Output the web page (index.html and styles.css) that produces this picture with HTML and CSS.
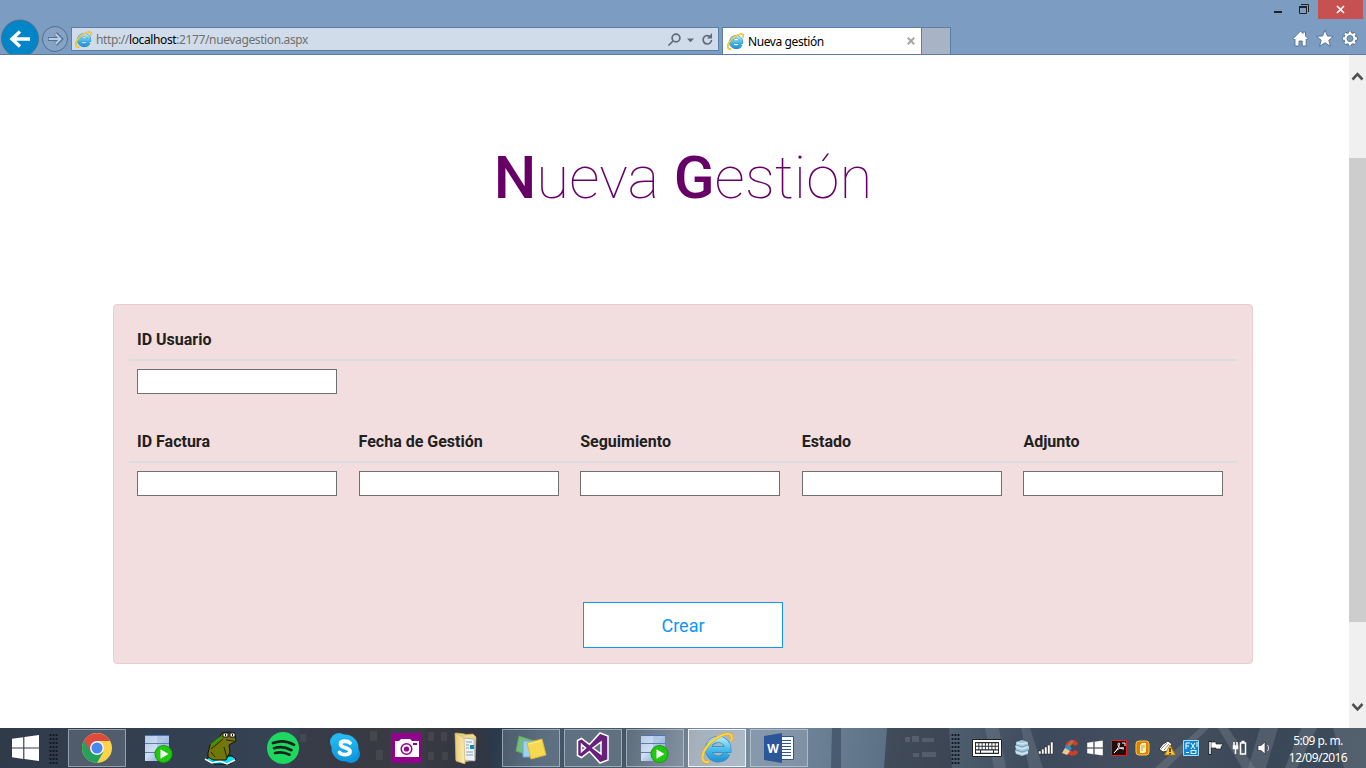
FILE: index.html
```html
<!DOCTYPE html>
<html lang="es">
<head>
<meta charset="utf-8">
<title>Nueva gestión</title>
<link rel="stylesheet" href="styles.css">
</head>
<body>
<svg class="defs" aria-hidden="true">
  <defs>
    <linearGradient id="ieBlue" x1="0" y1="0" x2="0" y2="1"><stop offset="0" stop-color="#a3e4fa"/><stop offset=".5" stop-color="#4bbdec"/><stop offset="1" stop-color="#2698d8"/></linearGradient>
    <linearGradient id="serverBlue" x1="0" y1="0" x2="1" y2="1"><stop offset="0" stop-color="#b5c9e8"/><stop offset=".45" stop-color="#cfdef3"/><stop offset="1" stop-color="#6f92c9"/></linearGradient>
    <linearGradient id="folderGold" x1="0" y1="0" x2="1" y2="0"><stop offset="0" stop-color="#e9c974"/><stop offset="1" stop-color="#fbeeb4"/></linearGradient>
    <linearGradient id="skypeBlue" x1="0" y1="0" x2="0" y2="1"><stop offset="0" stop-color="#27bdf3"/><stop offset="1" stop-color="#0c95dc"/></linearGradient>
    <symbol id="ie" viewBox="0 0 32 32">
      <path d="M26 21.500A9.800 9.800 0 1 1 27 17.500H9" fill="none" stroke="#2d87b8" stroke-width="6.800"/>
      <path d="M26 21.500A9.800 9.800 0 1 1 27 17.500H9" fill="none" stroke="url(#ieBlue)" stroke-width="5.600"/>
      <path d="M8 29.500C1 32-1 25 5 16S24 0 29.500 2.500c2 1.500 1.500 4 .5 6.500" fill="none" stroke="#e3a41b" stroke-width="2.900"/>
      <path d="M8 29.500C1 32-1 25 5 16S24 0 29.500 2.500c2 1.500 1.500 4 .5 6.500" fill="none" stroke="#ffd644" stroke-width="1.900"/>
    </symbol>
    <symbol id="server" viewBox="0 0 30 30">
      <path d="M1 2h24v26H1z" fill="url(#serverBlue)"/>
      <path d="M13 3h12v7H13zM13 11h12v8H13z" fill="#8facdc" opacity=".45"/>
      <path d="M1 10.500h24M1 19.500h24" stroke="#5d7db0"/>
      <path d="M1 2.500h24" stroke="#4b74b5"/>
      <circle cx="19.500" cy="21" r="9" fill="#159e0a"/><circle cx="19.500" cy="21" r="8" fill="#1fc90d"/>
      <path d="M16.500 16.200l8 4.800-8 4.800z" fill="#fff"/>
    </symbol>
    <symbol id="windows" viewBox="0 0 26 25">
      <path d="M0 3.600l10.800-1.500v9.900H0zM11.900 1.900L26 0v12H11.900zM0 13.100h10.800V23L0 21.500zM11.900 13.100H26V25l-14.100-1.900z" fill="#fff"/>
    </symbol>
  </defs>
</svg>

<header class="browser">
  <div class="titlebar">
    <svg class="minimize" width="8" height="19"><path d="M0 11h8v2H0z" fill="#222"/></svg>
    <svg class="restore" width="11" height="19" fill="none" stroke="#222"><path d="M2 4.500h7.500V12"/><path d="M.5 6.500h7v7h-7z"/><path d="M0 7h8" stroke-width="2"/></svg>
    <button class="close" aria-label="Cerrar"><svg width="9" height="9"><path d="M1 1l7 7M8 1L1 8" stroke="#fff" stroke-width="1.700"/></svg></button>
  </div>
  <nav class="navbar">
    <svg class="back" width="40" height="35">
      <circle cx="20" cy="19.500" r="18.500" fill="#0085c8" stroke="#506f91"/>
      <path d="M30 20H12M20 12.500L12 20l8 7.500" fill="none" stroke="#fff" stroke-width="3.400"/>
    </svg>
    <svg class="forward" width="28" height="35">
      <circle cx="14" cy="19" r="12.500" fill="#86a3c6" stroke="#506f91"/>
      <path d="M7 19h12M14.500 13.500l5.500 5.500-5.500 5.500" fill="none" stroke="#536f91" stroke-width="4"/>
      <path d="M7.700 19h12M14.500 14l5 5-5 5" fill="none" stroke="#b8cce2" stroke-width="2"/>
    </svg>
    <div class="address">
      <svg width="17" height="17"><use href="#ie"/></svg>
      <span class="url">http://<b>localhost</b>:2177/nuevagestion.aspx</span>
      <svg class="address-tools" width="48" height="18" fill="none" stroke="#606c7b" stroke-width="1.700">
        <circle cx="10" cy="8" r="3.900"/><path d="M7 11l-4.500 4.500"/>
        <path d="M21 8.500h7l-3.500 3.700z" fill="#606c7b" stroke="none"/>
        <path d="M43.500 6.200A4.200 4.200 0 1 0 45.500 10"/><path d="M46 3v5.500h-5z" fill="#606c7b" stroke="none"/>
      </svg>
    </div>
    <div class="tab">
      <svg width="17" height="17"><use href="#ie"/></svg>
      <span>Nueva gestión</span>
      <svg class="tab-close" width="8" height="8"><path d="M.8.8l6.400 6.400M7.200.8L.8 7.200" stroke="#a5a5a5" stroke-width="2"/></svg>
    </div>
    <div class="new-tab"></div>
    <svg class="browser-tools" width="66" height="19" viewBox="0 0 66 19" fill="#fff" stroke="#506f91" stroke-width=".9">
      <path d="M1 9.800L8.500 2l2.500 2.500V3h2.500v4l2.700 2.800-1.200 1.200-.8-.8V17h-4v-5H7v5H3v-6.800l-.8.800z"/>
      <path d="M33 1l2.400 6 6.100.3-4.700 3.900 1.700 6.100-5.500-3.500-5.500 3.500 1.700-6.100-4.700-3.900 6.100-.3z"/>
      <g fill="none">
        <path d="M58 2v15M50.500 9.500h15M52.700 4.200l10.600 10.600M63.300 4.200L52.700 14.800" stroke-width="4"/>
        <circle cx="58" cy="9.500" r="4.500" stroke-width="4"/>
        <path d="M58 2.500v14M51 9.500h14M53 4.500l10 10M63 4.500l-10 10" stroke="#fff" stroke-width="2.400"/>
        <circle cx="58" cy="9.500" r="4.400" stroke="#fff" stroke-width="2.400"/>
      </g>
      <circle cx="58" cy="9.500" r="3" fill="#7c9cc1"/>
    </svg>
  </nav>
</header>

<div class="viewport">
  <main class="page">
    <h1 class="title"><b>N</b>ueva <b>G</b>estión</h1>
    <form class="panel">
      <div class="fields">
        <div class="field"><label for="usuario">ID Usuario</label><input id="usuario"></div>
      </div>
      <div class="fields">
        <div class="field"><label for="factura">ID Factura</label><input id="factura"></div>
        <div class="field"><label for="fecha">Fecha de Gestión</label><input id="fecha"></div>
        <div class="field"><label for="seguimiento">Seguimiento</label><input id="seguimiento"></div>
        <div class="field"><label for="estado">Estado</label><input id="estado"></div>
        <div class="field"><label for="adjunto">Adjunto</label><input id="adjunto"></div>
      </div>
      <button type="button" class="create">Crear</button>
    </form>
  </main>
  <div class="scrollbar">
    <svg width="17" height="103"><path d="M3.500 24.500l5-5.300 5 5.300" fill="none" stroke="#505050" stroke-width="2.600"/></svg>
    <div class="thumb"></div>
    <svg width="17" height="106"><path d="M3.500 82l5 5.300 5-5.300" fill="none" stroke="#505050" stroke-width="2.600"/></svg>
  </div>
</div>

<footer class="taskbar">
  <svg class="skyline" width="1366" height="40" aria-hidden="true">
    <path d="M300 0h90v40h-100zM425 0h62l5 40h-65z" fill="#39363b" opacity=".45"/>
    <path d="M300 6h6v8h-6zM370 3h7v10h-7zM376 22h7v10h-7zM428 4h6v9h-6zM441 4h6v9h-6zM428 24h6v8h-6zM442 24h6v8h-6z" fill="#6a6b70" opacity=".25"/>
    <path d="M832 0h9v40h-10z" fill="#34465a" opacity=".6"/>
    <path d="M887 0h62l3 40h-68z" fill="#343c49" opacity=".7"/>
    <path d="M905 9h5v5h-5zM912 8h7v6h-7zM922 10h12v4h-12zM913 25h6v4h-6zM922 24h14v5h-14z" fill="#8791a0" opacity=".3"/>
    <path d="M985 0h14l7 40h-12zM1021 0h9l13 40h-14z" fill="#8d96a2" opacity=".28"/>
    <path d="M1155 40L1200 0h9l-42 40zM1218 0h10l27 40h-13z" fill="#9ca2aa" opacity=".25"/>
    <path d="M1260 0h18l-12 40h-18zM1301 0h16l-20 40h-12zM1333 0h33v40h-22z" fill="#87929d" opacity=".3"/>
  </svg>
  <div class="start"><svg width="27" height="26"><use href="#windows"/></svg></div>
  <div class="grip"></div>
  <div class="apps">
    <div class="app open">
      <svg width="30" height="30" viewBox="0 0 30 30">
        <circle cx="15" cy="15" r="15" fill="#fdd34a"/>
        <path d="M15 15L2.010 7.500A15 15 0 0 0 15 30l6.500-11.250z" fill="#26a15d"/>
        <path d="M2.010 7.500A15 15 0 0 1 28 8H15l-6.500 10.750z" fill="#dd4b3e"/>
        <circle cx="15" cy="15" r="7" fill="#f4f4f4"/><circle cx="15" cy="15" r="5.500" fill="#4788f0"/>
      </svg>
    </div>
    <div class="app"><svg width="30" height="30"><use href="#server"/></svg></div>
    <div class="app">
      <svg width="34" height="34" viewBox="0 0 34 34">
        <path d="M2 28l6-3 20 0 4 3-6 5H10z" fill="#09dff0" stroke="#000"/>
        <path d="M1 28l7 4 8-2 7 3 8-4" fill="none" stroke="#fff" stroke-width="1.500"/>
        <path d="M4 22l2-8 9-7 3-5 8-1 5 4 1 5-7 4 1 7-4 8H9l-5-3z" fill="#777408" stroke="#111"/>
        <path d="M7 18L19 8M7 21l4 5M20 16l3 11" fill="none" stroke="#172b00"/>
        <path d="M7 14l10-8" stroke="#25a900" stroke-width="2"/>
        <path d="M9 20h2M14 16h2M18 20h2M13 23h2M21 13h2" stroke="#20a000"/>
        <path d="M19 2h5v4h-5zM26 2h5v4h-5z" fill="#fff" stroke="#111"/><path d="M21 3h1v2h-1zM28 3h1v2h-1z" fill="#111"/><path d="M22 9l8 1" stroke="#222"/>
      </svg>
    </div>
    <div class="app">
      <svg width="32" height="32" viewBox="0 0 32 32"><circle cx="16" cy="16" r="16" fill="#1ed760"/><path d="M6 11c7-2.600 15-1.700 21 1.800M7 16.200c6-1.800 12-1 17.500 2M8 21c5-1.300 10-.7 14.500 1.700" fill="none" stroke="#17241c" stroke-width="2.700" stroke-linecap="round"/></svg>
    </div>
    <div class="app">
      <svg width="30" height="30" viewBox="0 0 30 30"><circle cx="9" cy="9" r="9" fill="#21b7ef"/><circle cx="21" cy="21" r="9" fill="#0c95dc"/><circle cx="15" cy="15" r="13.500" fill="url(#skypeBlue)"/><path d="M20 10C17.500 7.500 10.500 7.500 10.500 11c0 4.500 9.500 3 9.500 7.500 0 4-7.800 4-10.500 1" fill="none" stroke="#fff" stroke-width="3.800" stroke-linecap="round"/></svg>
    </div>
    <div class="app">
      <svg width="30" height="30" viewBox="0 0 30 30"><path d="M0 0h30v30H0z" fill="#92008d"/><path d="M3 8h4l2-2h9l2 2h7v16H3z" fill="#fff"/><circle cx="14.500" cy="16" r="5.300" fill="none" stroke="#92008d" stroke-width="1.500"/><circle cx="14.500" cy="16" r="2.600" fill="#92008d"/><path d="M21 10h4v2h-4z" fill="#92008d"/></svg>
    </div>
    <div class="app folder">
      <svg width="24" height="32" viewBox="0 0 24 32"><path d="M2 1l9 1v28l-9-2z" fill="url(#folderGold)" stroke="#c8aa59" stroke-width=".7"/><path d="M7 3l12-1 3 3-1 23-12 2z" fill="#f0d78c" stroke="#cdb265" stroke-width=".7"/><path d="M8 6l12 1 1 22-12-1z" fill="#edf2f5" stroke="#9ba8b0" stroke-width=".7"/><path d="M12 10h6M12 13h3M12 16h3M12 20h7M12 23h7" stroke="#8aa2b3"/><path d="M16 13h4v4h-4z" fill="#1685bb"/><path d="M1 1l9 5 1 26-9-3z" fill="url(#folderGold)" stroke="#cdb265" stroke-width=".7"/></svg>
    </div>
    <div class="app open">
      <svg width="34" height="28" viewBox="0 0 34 28"><path d="M5 2l15 5-4 15-14-5z" fill="#77bd78" stroke="#5fa766"/><path d="M9 7h15l-1 16H9z" fill="#9bd1f6" stroke="#69a9d2"/><path d="M13 9l15-4 4 16-15 4z" fill="#f4d951" stroke="#dbb934"/><path d="M14 10l13-3" stroke="#fff18c"/></svg>
    </div>
    <div class="app open">
      <svg width="34" height="34" viewBox="0 0 34 34"><path fill-rule="evenodd" d="M1.500 9.500l4-2 8 6L24 2l8 3v24l-8 3-10.500-11.500-8 6-4-2zM5.500 13.500v7l4-3.500zM25 11l-8 6 8 6z" fill="#68217a" stroke="#fff" stroke-width="1.500"/></svg>
    </div>
    <div class="app open"><svg width="30" height="30"><use href="#server"/></svg></div>
    <div class="app open active"><svg width="32" height="32"><use href="#ie"/></svg></div>
    <div class="app open">
      <svg width="30" height="30" viewBox="0 0 30 30"><path d="M16 3.500h13.500v23H16z" fill="#fff" stroke="#2b579a"/><path d="M18 7.500h9M18 10.500h9M18 13.500h9M18 16.500h9M18 19.500h9M18 22.500h9" stroke="#2b579a"/><path d="M0 3l18-3v30L0 27z" fill="#2b579a"/><text class="word-letter" x="9" y="19.500" text-anchor="middle">W</text></svg>
    </div>
  </div>
  <div class="grip tray-grip"></div>
  <svg class="keyboard" width="30" height="18"><path d="M.5.500h29v17H.5z" fill="#fff" stroke="#222"/><path d="M3 3h24v12H3z" fill="#252a31"/><path d="M4 5.500h22M4 9h22" stroke="#fff" stroke-width="2.400" stroke-dasharray="2.400 .87"/><path d="M4 12.700h4M9 12.700h12M22 12.700h4" stroke="#fff" stroke-width="2.200"/></svg>
  <div class="tray">
    <svg width="16" height="16" viewBox="0 0 16 16"><path d="M2 2l6-2 6 2v3l1 1v3l-1 2v3l-6 2-6-2-1-3 1-2-1-3 1-1z" fill="#a4c7dc"/><path d="M3 3l5 1 5-1M2 7l6 2 6-2M2 12l6 2 6-2" fill="none" stroke="#d2e7f3" stroke-width="1.600"/><path d="M2 5l6 2 6-2M2 10l6 2 6-2" fill="none" stroke="#7ba3bc"/></svg>
    <svg width="16" height="16"><path d="M.5 11h2.500v3H.5zM3.500 9H6v5H3.500zM6.500 7H9v7H6.500zM9.500 5H12v9H9.500zM12.500 2H15v12h-2.500z" fill="#fff" stroke="#222" stroke-width=".5"/></svg>
    <svg width="16" height="16"><path d="M14.500 5C12 0 5 2 5 8c0 6 7 7 10 3" fill="none" stroke="#d43c25" stroke-width="4"/><path d="M9 0l3 1-4 6-3-1z" fill="#aa7650"/><path d="M4 5l6 3-2 3-5-2z" fill="#2e90d0"/><path d="M3 8l5 3-3 4-5-2z" fill="#e9c991"/></svg>
    <svg width="16" height="16" class="outlined"><use href="#windows"/></svg>
    <svg width="16" height="16"><path d="M.5.500h15v15H.5z" fill="#220d0d" stroke="#ec1d19"/><path d="M3 13c4-4 7-10 5-10S7 9 13 9M4 12c2-3 7-5 9-4M11 3h3v3" fill="none" stroke="#fff"/></svg>
    <svg width="16" height="16"><rect x="1" y="1" width="13" height="14" rx="3" fill="#d98300" stroke="#ffc456"/><path d="M5 5l2-2h4v9l-2 1H5z" fill="#fff0bd"/><path d="M7 5v6M9 5v3" stroke="#d59a23"/></svg>
    <svg width="18" height="16"><path d="M1 9l4-5 5-3 4 3-4 7-5 1z" fill="#fff" stroke="#333"/><path d="M3 9l6-6M6 10l5-6" stroke="#999"/><path d="M12 5l5.500 10h-11z" fill="#ffc42c" stroke="#a46c00" stroke-width=".7"/><path d="M12 8v4M12 13v1.500" stroke="#222" stroke-width="1.400"/></svg>
    <svg width="16" height="16"><path d="M.5.500h15v15H.5z" fill="#1287d1" stroke="#9bddf8"/><path d="M3 3h4M3 6h3M3 3v6M8 3l4 6M12 3L8 9M14 2v5" fill="none" stroke="#fff"/><path d="M3 12.500h3M8 10.500h5v3H8z" stroke="#e9f7ff" fill="none"/></svg>
    <svg width="16" height="16"><path d="M2 1v14" stroke="#222" stroke-width="3"/><path d="M3 2h5v2h7l-2 3v2H8V8H3z" fill="#fff" stroke="#222" stroke-width=".7"/><path d="M2 2v12" stroke="#fff" stroke-width="1.500"/></svg>
    <svg width="16" height="16" fill="none" stroke="#fff" stroke-width="1.500"><path d="M8.500 3h5v11h-5zM9.500 1.500h3M2 2v4M5 2v4M3.500 6v8"/><path d="M1.500 6h4v2.500h-4z" fill="#fff"/></svg>
    <svg width="16" height="16"><path d="M2 5.500h3L9 2v12l-4-3.500H2z" fill="#fff" stroke="#222" stroke-width=".6"/><path d="M11.500 5c1.500 2 1.500 4 0 6" fill="none" stroke="#ddd"/></svg>
  </div>
  <div class="clock"><span>5:09 p. m.</span><span>12/09/2016</span></div>
</footer>
</body>
</html>
```
FILE: styles.css
```css
* { box-sizing: border-box; }
body { margin: 0; width: 1366px; height: 768px; overflow: hidden; display: flex; flex-direction: column; background: #fff; font-family: Roboto, sans-serif; }
svg { flex: none; display: block; }
.defs { width: 0; height: 0; position: absolute; }
.browser { height: 55px; flex: none; background: #7c9cc1; border-bottom: 1px solid #5c7da3; font: 12px "Noto Sans", sans-serif; }
.titlebar { height: 19px; display: flex; justify-content: flex-end; padding-right: 3px; }
.restore { margin: 0 8px 0 17px; }
.close { width: 45px; height: 19px; border: 0; padding: 0; background: #c75050; display: flex; align-items: center; justify-content: center; }
.navbar { height: 35px; display: flex; align-items: flex-start; }
.forward { margin: 1px 0 0 1px; }
.address { width: 648px; height: 24px; margin: 8px 0 0 2px; padding: 0 4px 0 3px; border: 1px solid #5e7fa5; background: #d0dce9; display: flex; align-items: center; color: #707070; }
.url { margin: 1px 0 0 4px; letter-spacing: -.38px; white-space: nowrap; }
.url b { font-weight: 400; color: #000; }
.address-tools { margin-left: auto; }
.tab { width: 200px; height: 27px; margin: 8px 0 0 3px; padding: 0 6px 0 4px; border: 1px solid #5e7fa5; border-bottom: 0; background: #fff; display: flex; align-items: center; gap: 4px; color: #000; }
.tab span { letter-spacing: -.4px; }
.tab-close { margin-left: auto; }
.new-tab { width: 29px; height: 27px; margin-top: 8px; background: #a8b4c6; border: 1px solid #5e7fa5; border-width: 1px 1px 0 0; }
.browser-tools { margin: 10px 8px 0 auto; }
.viewport { height: 673px; flex: none; display: flex; }
.page { width: 1349px; padding: 90px 96px 0 113px; }
.title { margin: 0; height: 66px; color: #660066; font-size: 60px; line-height: 66px; font-weight: 100; text-align: center; letter-spacing: .07px; }
.title b { font-weight: 500; }
.panel { width: 1140px; height: 360px; margin: 93px 0 0; padding: 15px; border: 1px solid #ebccd1; border-radius: 4px; background: #f2dede; display: flex; flex-direction: column; }
.fields { width: 1108px; height: 102px; flex: none; display: grid; grid-template-columns: repeat(5, 1fr); background: linear-gradient(#ddd, #ddd) 0 39px / 100% 2px no-repeat; }
.field { padding: 8px; display: flex; flex-direction: column; }
.field label { height: 23px; color: #212121; font-size: 16px; line-height: 23px; font-weight: 700; }
.field input { width: 200px; height: 25px; margin: 18px 0 0; padding: 0; border: 1px solid #707070; background: #fff; }
.create { width: 200px; height: 46px; margin: 78px auto 0; border: 1px solid #0a97fb; background: #fff; color: #0a97fb; font: 18px Roboto, sans-serif; }
.scrollbar { width: 17px; background: #f0f0f0; }
.thumb { height: 464px; background: #cdcdcd; }
.taskbar { position: relative; isolation: isolate; height: 40px; flex: none; display: flex; align-items: center; background: linear-gradient(100deg, #303b4a 0, #354354 22%, #3a3d45 30%, #29384b 36%, #42566a 40%, #465665 46%, #7b8997 51%, #778b9e 55%, #6a7f94 60%, #5c7085 65%, #4d5c6d 70%, #3d4a5b 76%, #454f5e 86%, #3a4757 92%, #3d4b5a 100%); }
.skyline { position: absolute; inset: 0; z-index: -1; }
.start { width: 49px; padding-left: 12px; }
.grip { width: 9px; height: 31px; background: radial-gradient(circle, #111820 1px, transparent 1.2px) 0 0 / 3px 4px; }
.apps { margin-left: 10px; display: flex; gap: 4px; }
.app { width: 58px; height: 38px; display: flex; align-items: center; justify-content: center; }
.folder { padding-right: 6px; }
.open { border: 1px solid rgba(220,228,236,.5); background: rgba(190,205,220,.22); }
.active { border-color: #edf1f4; background: linear-gradient(110deg, rgba(185,195,207,.65), rgba(220,227,235,.55)); }
.word-letter { font: 700 12px "Open Sans", sans-serif; fill: #fff; }
.tray-grip { margin-left: 143px; }
.keyboard { margin-left: 12px; }
.tray { margin-left: 8px; width: 266px; display: grid; grid-template-columns: repeat(11, 24.200px); align-items: center; justify-items: center; }
.outlined { stroke: #222; stroke-width: .6px; }
.clock { width: 62px; margin-left: 11px; padding-top: 1px; display: flex; flex-direction: column; align-items: center; color: #fff; font: 12px/17px "Noto Sans", sans-serif; letter-spacing: -.55px; white-space: nowrap; }
```
